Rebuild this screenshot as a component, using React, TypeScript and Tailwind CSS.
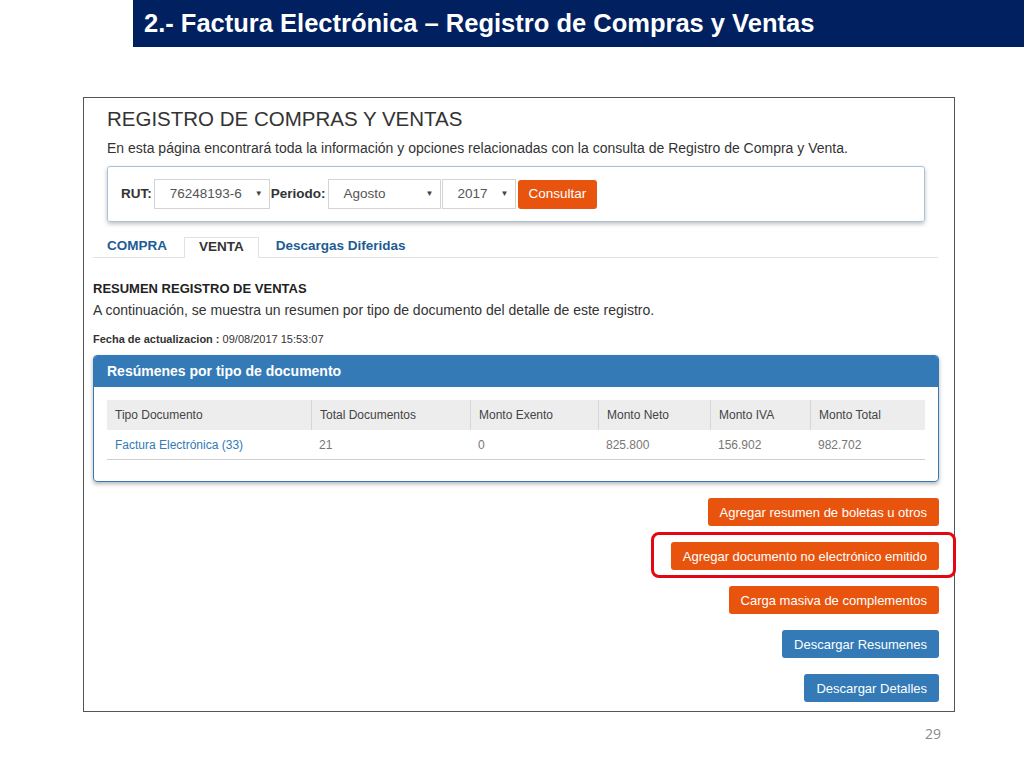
import React from 'react';

const sans = { fontFamily: '"Liberation Sans", Arial, sans-serif' };

function Select({ value, width }: { value: string; width: string }) {
  return (
    <div className={`flex items-center justify-between h-[30px] border border-[#d4d4d4] bg-white pl-[15px] pr-[6px] text-[13.5px] text-[#555] ${width}`}>
      <span>{value}</span>
      <span className="text-[8px] text-[#444]">▼</span>
    </div>
  );
}

function OrangeBtn({ label }: { label: string }) {
  return (
    <button className="h-[28px] px-[12px] rounded-[3px] bg-[#e8540e] text-white text-[13px] leading-none">
      {label}
    </button>
  );
}

function BlueBtn({ label }: { label: string }) {
  return (
    <button className="h-[28px] px-[12px] rounded-[3px] bg-[#337ab7] text-white text-[13px] leading-none">
      {label}
    </button>
  );
}

const columns = [
  { name: 'Tipo Documento', w: 'w-[204px]' },
  { name: 'Total Documentos', w: 'w-[159px]' },
  { name: 'Monto Exento', w: 'w-[128px]' },
  { name: 'Monto Neto', w: 'w-[112px]' },
  { name: 'Monto IVA', w: 'w-[100px]' },
  { name: 'Monto Total', w: 'flex-1' },
];

const row = ['Factura Electrónica (33)', '21', '0', '825.800', '156.902', '982.702'];

export default function App() {
  return (
    <div className="w-[1024px] h-[768px] bg-white relative overflow-hidden" style={sans}>
      {/* Slide title */}
      <div className="ml-[133px] h-[47px] bg-[#002060] flex items-center pl-[11px]">
        <h1 className="text-white font-bold text-[25.5px] leading-none">
          2.- Factura Electrónica – Registro de Compras y Ventas
        </h1>
      </div>

      {/* Screenshot frame */}
      <div className="ml-[83px] mt-[50px] w-[872px] h-[615px] border border-[#555] pl-[9px] pr-[16px]">
        <div className="pl-[14px]">
          <h2 className="mt-[9px] text-[20.5px] leading-[24px] text-[#333]">REGISTRO DE COMPRAS Y VENTAS</h2>
          <p className="mt-[9px] text-[14px] leading-[16px] text-[#333]">
            En esta página encontrará toda la información y opciones relacionadas con la consulta de Registro de Compra y Venta.
          </p>
          <div className="mt-[10px] w-[818px] h-[56px] border border-[#a9c3dc] rounded-[3px] shadow-[0_2px_4px_rgba(0,0,0,0.25)] flex items-center pl-[13px] gap-[1px]">
            <span className="font-bold text-[13.5px] text-[#333] mr-[1px]">RUT:</span>
            <Select value="76248193-6" width="w-[116px]" />
            <span className="font-bold text-[13.5px] text-[#333] mr-[1px]">Periodo:</span>
            <Select value="Agosto" width="w-[113px]" />
            <Select value="2017" width="w-[74px]" />
            <button className="ml-[1px] h-[29px] px-[11px] rounded-[3px] bg-[#e8540e] text-white text-[13.5px]">Consultar</button>
          </div>
        </div>

        {/* Tabs */}
        <div className="mt-[15px] flex items-end border-b border-[#e2e2e2] h-[21px] pl-[14px] text-[13.5px] leading-[16px] font-bold">
          <span className="text-[#1d5c95] pr-[17px] pb-[3px]">COMPRA</span>
          <span className="h-[21px] border border-b-0 border-[#e2e2e2] bg-white px-[14px] text-[#333] -mb-[1px] pt-[1px]">VENTA</span>
          <span className="text-[#1d5c95] pl-[17px] pb-[3px]">Descargas Diferidas</span>
        </div>

        <h3 className="mt-[23px] font-bold text-[13px] leading-[16px] text-[#222]">RESUMEN REGISTRO DE VENTAS</h3>
        <p className="mt-[5px] text-[14px] leading-[16px] text-[#333]">
          A continuación, se muestra un resumen por tipo de documento del detalle de este registro.
        </p>
        <p className="mt-[14px] text-[11px] leading-[14px] text-[#333]">
          <span className="font-bold">Fecha de actualizacion :</span> 09/08/2017 15:53:07
        </p>

        {/* Summary panel */}
        <div className="mt-[9px] w-[846px] h-[127px] border border-[#337ab7] rounded-[4px] shadow-[0_2px_4px_rgba(0,0,0,0.3)] overflow-hidden">
          <div className="h-[31px] bg-[#337ab7] flex items-center pl-[13px] text-white font-bold text-[14px]">
            Resúmenes por tipo de documento
          </div>
          <div className="px-[13px] pt-[13px]">
            <div className="flex h-[30px] bg-[#ededed] text-[12px] text-[#444]">
              {columns.map((c, i) => (
                <div key={c.name} className={`${c.w} flex items-center pl-[8px] ${i > 0 ? 'border-l border-[#d6d6d6]' : ''}`}>
                  {c.name}
                </div>
              ))}
            </div>
            <div className="flex h-[30px] border-b border-[#cfcfcf] text-[12px] text-[#777]">
              {columns.map((c, i) => (
                <div key={c.name} className={`${c.w} flex items-center pl-[8px] ${i === 0 ? 'text-[#337ab7]' : ''}`}>
                  {row[i]}
                </div>
              ))}
            </div>
          </div>
        </div>

        {/* Actions */}
        <div className="w-[846px] flex flex-col items-end gap-[16px] mt-[16px]">
          <OrangeBtn label="Agregar resumen de boletas u otros" />
          <div className="relative">
            <OrangeBtn label="Agregar documento no electrónico emitido" />
            <div className="absolute -left-[20px] -right-[17px] -top-[10px] -bottom-[8px] border-[3px] border-[#e30613] rounded-[8px]" />
          </div>
          <OrangeBtn label="Carga masiva de complementos" />
          <BlueBtn label="Descargar Resumenes" />
          <BlueBtn label="Descargar Detalles" />
        </div>
      </div>

      <div className="absolute left-[925px] top-[723px] text-[14px] text-[#8a8a8a]" style={{ fontFamily: '"Open Sans", sans-serif' }}>
        29
      </div>
    </div>
  );
}
